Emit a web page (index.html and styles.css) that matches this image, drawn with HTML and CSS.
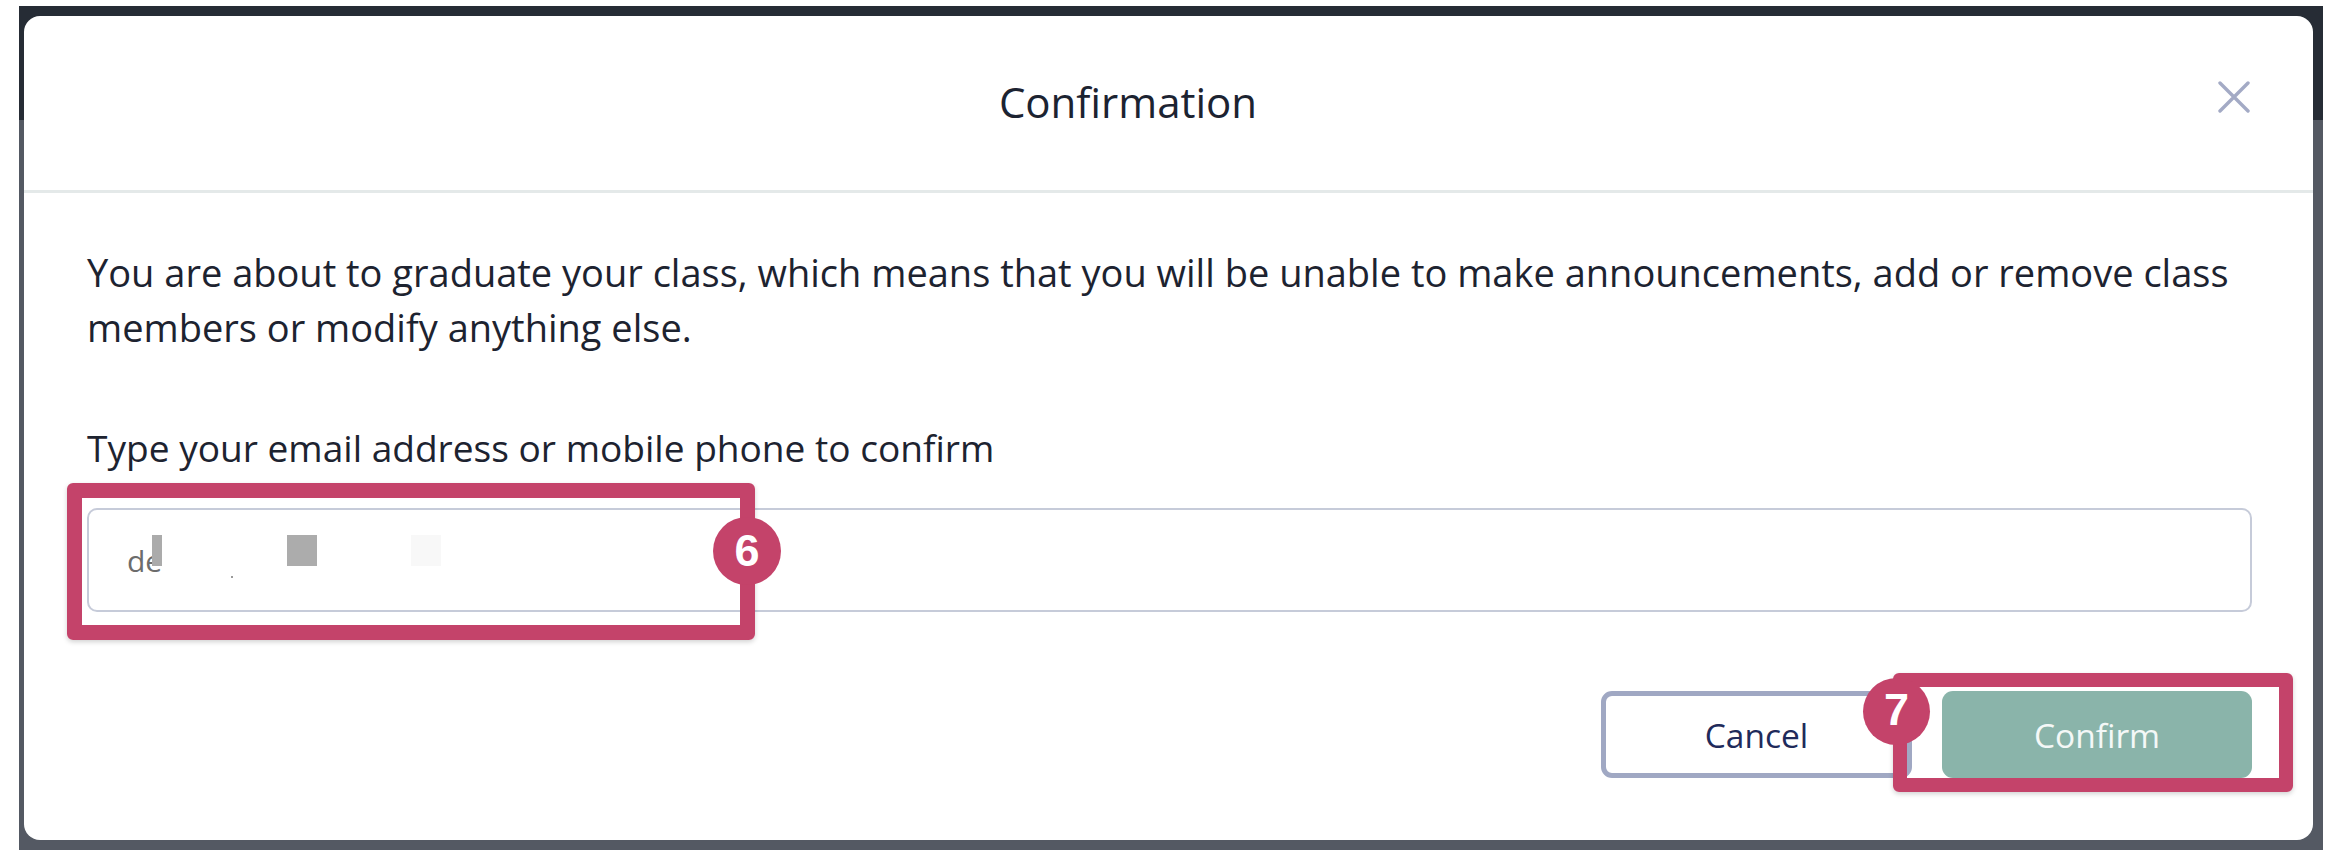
FILE: index.html
```html
<!DOCTYPE html>
<html lang="en">
<head>
<meta charset="utf-8">
<title>Confirmation</title>
<link rel="stylesheet" href="styles.css">
</head>
<body>
<div class="stage">
  <div class="backdrop">
    <div class="modal">
      <div class="modal-header">
        <h1 class="modal-title">Confirmation</h1>
        <button class="close-btn" aria-label="Close">
          <svg viewBox="0 0 32 32" width="32" height="32"><path d="M2 2 L30 30 M30 2 L2 30" stroke="#a3aac5" stroke-width="3.4" stroke-linecap="round" fill="none"/></svg>
        </button>
      </div>
      <div class="modal-body">
        <p class="message">You are about to graduate your class, which means that you will be unable to make announcements, add or remove class members or modify anything else.</p>
        <label class="field-label">Type your email address or mobile phone to confirm</label>
        <div class="field">
          <span class="typed">de</span>
          <span class="redact r1"></span>
          <span class="redact r2"></span>
          <span class="redact r3"></span>
          <span class="redact dot"></span>
        </div>
        <div class="actions">
          <button class="btn btn-cancel">Cancel</button>
          <button class="btn btn-confirm">Confirm</button>
        </div>
      </div>
    </div>
  </div>
  <div class="annot box6"></div>
  <div class="badge badge6">6</div>
  <div class="annot box7"></div>
  <div class="badge badge7">7</div>
</div>
</body>
</html>
```

FILE: styles.css
```css
html, body {
  margin: 0;
  padding: 0;
  background: #ffffff;
}
body {
  width: 2334px;
  height: 860px;
  overflow: hidden;
  font-family: "Open Sans", "Noto Sans", sans-serif;
}
.stage {
  position: relative;
  width: 2334px;
  height: 860px;
}
.backdrop {
  position: relative;
  margin: 0 0 0 19px;
  top: 6px;
  width: 2304px;
  height: 844px;
  box-sizing: border-box;
  padding: 10px 10px 10px 5px;
  background: linear-gradient(to bottom, #262c35 0, #262c35 114px, #545963 114px, #545963 100%);
}
.modal {
  position: relative;
  width: 2289px;
  height: 824px;
  background: #ffffff;
  border-radius: 16px;
  display: flex;
  flex-direction: column;
}
.modal-header {
  height: 170px;
  padding-bottom: 4px;
  border-bottom: 3px solid #e4e9e9;
  display: flex;
  align-items: center;
  justify-content: center;
  padding-right: 81px;
}
.modal-title {
  margin: 0;
  font-size: 42px;
  font-weight: 400;
  color: #1c2331;
  flex: 1;
  text-align: center;
}
.close-btn {
  position: absolute;
  right: 63px;
  top: 64px;
  width: 33px;
  height: 33px;
  padding: 0;
  border: 0;
  background: none;
  display: flex;
  align-items: center;
  justify-content: center;
}
.modal-body {
  padding: 52px 61px 62px 63px;
  display: flex;
  flex-direction: column;
}
.message {
  margin: 0;
  font-size: 38px;
  line-height: 55px;
  color: #1d2330;
}
.field-label {
  display: block;
  margin-top: 65px;
  font-size: 37.1px;
  line-height: 55px;
  color: #1d2330;
}
.field {
  position: relative;
  margin-top: 33px;
  height: 104px;
  box-sizing: border-box;
  border: 2px solid #c6cbd9;
  border-radius: 10px;
  padding-left: 38px;
  display: flex;
  align-items: center;
}
.typed {
  font-size: 30px;
  color: #6c6c6c;
}
.redact {
  position: absolute;
  top: 25px;
  height: 31px;
}
.r1 { left: 63px; width: 10px; background: #ababab; }
.r2 { left: 198px; width: 30px; background: #acacac; }
.r3 { left: 322px; width: 30px; background: #f8f8f8; }
.dot { left: 142px; top: 66px; width: 2px; height: 2px; background: #9a9a9a; }
.actions {
  margin-top: 79px;
  display: flex;
  justify-content: flex-end;
  gap: 30px;
}
.btn {
  height: 87px;
  width: 311px;
  border-radius: 11px;
  font-family: "Open Sans", "Noto Sans", sans-serif;
  font-size: 33.5px;
  padding: 0;
}
.btn-cancel {
  background: #ffffff;
  border: 5px solid #a0a8c3;
  color: #1f2b5b;
}
.btn-confirm {
  width: 310px;
  background: #8ab4aa;
  border: 0;
  color: #f4f8f7;
}
.annot {
  position: absolute;
  box-sizing: border-box;
  border: 15px solid #c4436a;
  border-radius: 6px;
  box-shadow: 0 2px 5px rgba(0, 0, 0, 0.18);
}
.box6 {
  left: 67px;
  top: 483px;
  width: 688px;
  height: 157px;
}
.box7 {
  left: 1893px;
  top: 673px;
  width: 400px;
  height: 119px;
  border-width: 14px;
}
.badge {
  position: absolute;
  width: 68px;
  height: 68px;
  border-radius: 50%;
  background: #c4436a;
  color: #ffffff;
  font-family: "Liberation Sans", Arial, sans-serif;
  font-weight: 700;
  font-size: 45px;
  line-height: 68px;
  text-align: center;
}
.badge6 {
  left: 713px;
  top: 517px;
}
.badge7 {
  left: 1863px;
  top: 678px;
  width: 67px;
  height: 67px;
  line-height: 64px;
}
```
